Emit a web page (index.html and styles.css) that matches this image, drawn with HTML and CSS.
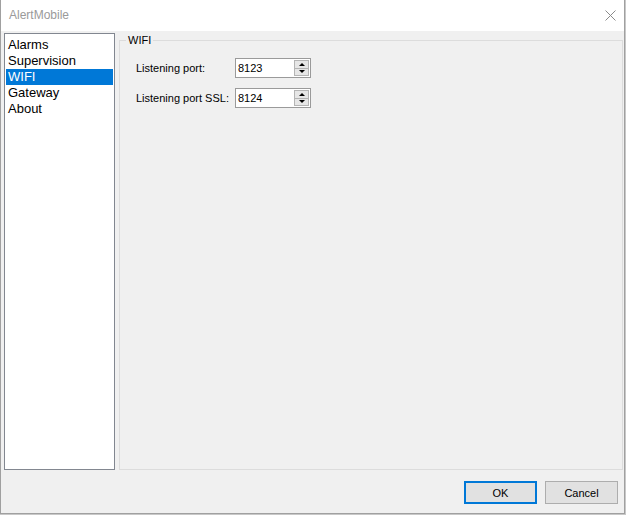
FILE: index.html
```html
<!DOCTYPE html>
<html lang="en">
<head>
  <meta charset="UTF-8">
  <meta name="viewport" content="width=device-width, initial-scale=1.0">
  <title>AlertMobile</title>
  <link rel="stylesheet" href="styles.css">
</head>
<body>
  <div class="window">
    <div class="titlebar">
      <span class="title">AlertMobile</span>
      <svg class="close" width="11" height="11" viewBox="0 0 11 11">
        <path d="M0.5 0.5 L10.5 10.5 M10.5 0.5 L0.5 10.5" stroke="#8a8a8a" stroke-width="1" fill="none"/>
      </svg>
    </div>

    <div class="client">
      <div class="content">
        <ul class="listbox">
          <li>Alarms</li>
          <li>Supervision</li>
          <li class="selected">WIFI</li>
          <li>Gateway</li>
          <li>About</li>
        </ul>

        <div class="groupbox">
          <span class="group-title">WIFI</span>
          <div class="field">
            <label>Listening port:</label>
            <div class="numeric">
              <span class="value">8123</span>
              <div class="spin">
                <div class="spin-btn"><span class="arrow up"></span></div>
                <div class="spin-btn"><span class="arrow down"></span></div>
              </div>
            </div>
          </div>
          <div class="field">
            <label>Listening port SSL:</label>
            <div class="numeric">
              <span class="value">8124</span>
              <div class="spin">
                <div class="spin-btn"><span class="arrow up"></span></div>
                <div class="spin-btn"><span class="arrow down"></span></div>
              </div>
            </div>
          </div>
        </div>
      </div>

      <div class="buttons">
        <button class="default">OK</button>
        <button>Cancel</button>
      </div>
    </div>
  </div>
</body>
</html>
```

FILE: styles.css
```css
body {
  margin: 0;
  background-color: #c8c8c8;
  font-family: "Liberation Sans", Arial, sans-serif;
  color: black;
}

.window {
  width: 623px;
  height: 513px;
  border-left: 1px solid #a0a0a0;
  border-right: 1px solid #a0a0a0;
  border-bottom: 1px solid #a0a0a0;
  background-color: #f0f0f0;
  display: flex;
  flex-direction: column;
}

.titlebar {
  height: 31px;
  background-color: white;
  display: flex;
  justify-content: space-between;
  align-items: center;
  padding: 0 8px 0 8px;
}

.title {
  font-size: 12px;
  color: #9a9a9a;
  margin-top: -1px;
}

.close {
  margin-top: -1px;
}

.client {
  flex: 1;
  display: flex;
  flex-direction: column;
  padding: 2px 1px 9px 3px;
}

.content {
  display: flex;
  gap: 4px;
  height: 437px;
}

.listbox {
  list-style: none;
  margin: 0;
  width: 107px;
  padding: 3px 1px 1px 1px;
  border: 1px solid #828790;
  background-color: white;
}

.listbox li {
  font-size: 13px;
  line-height: 16px;
  height: 16px;
  padding-left: 2px;
}

.listbox li.selected {
  background-color: #0078d7;
  color: white;
}

.groupbox {
  position: relative;
  flex: 1;
  margin-top: 7px;
  border: 1px solid #dcdcdc;
  padding: 17px 0 0 16px;
  display: flex;
  flex-direction: column;
  gap: 10px;
}

.group-title {
  position: absolute;
  top: -7px;
  left: 6px;
  padding: 0 2px;
  background-color: #f0f0f0;
  font-size: 11px;
  line-height: 13px;
}

.field {
  display: flex;
  align-items: center;
  height: 20px;
}

.field label {
  width: 99px;
  font-size: 11px;
}

.numeric {
  width: 74px;
  height: 18px;
  border: 1px solid #9a9a9a;
  background-color: white;
  display: flex;
  align-items: center;
}

.numeric .value {
  flex: 1;
  font-size: 11px;
  padding-left: 2px;
  margin-top: -1px;
}

.spin {
  width: 15px;
  height: 16px;
  margin-right: 1px;
  display: flex;
  flex-direction: column;
}

.spin-btn {
  flex: 1;
  background-color: #e6e6e6;
  border: 1px solid #b4b4b4;
  display: flex;
  justify-content: center;
  align-items: center;
}

.spin-btn + .spin-btn {
  border-top: none;
}

.arrow {
  width: 0;
  height: 0;
  border-left: 3px solid transparent;
  border-right: 3px solid transparent;
}

.arrow.up {
  border-bottom: 3px solid black;
}

.arrow.down {
  border-top: 3px solid black;
}

.buttons {
  display: flex;
  justify-content: flex-end;
  gap: 8px;
  margin-top: 11px;
  padding-right: 5px;
}

button {
  width: 73px;
  height: 23px;
  background-color: #e1e1e1;
  border: 1px solid #adadad;
  font-family: "Liberation Sans", Arial, sans-serif;
  font-size: 11px;
  color: black;
  padding: 0;
}

button.default {
  border: 2px solid #0078d7;
}
```
